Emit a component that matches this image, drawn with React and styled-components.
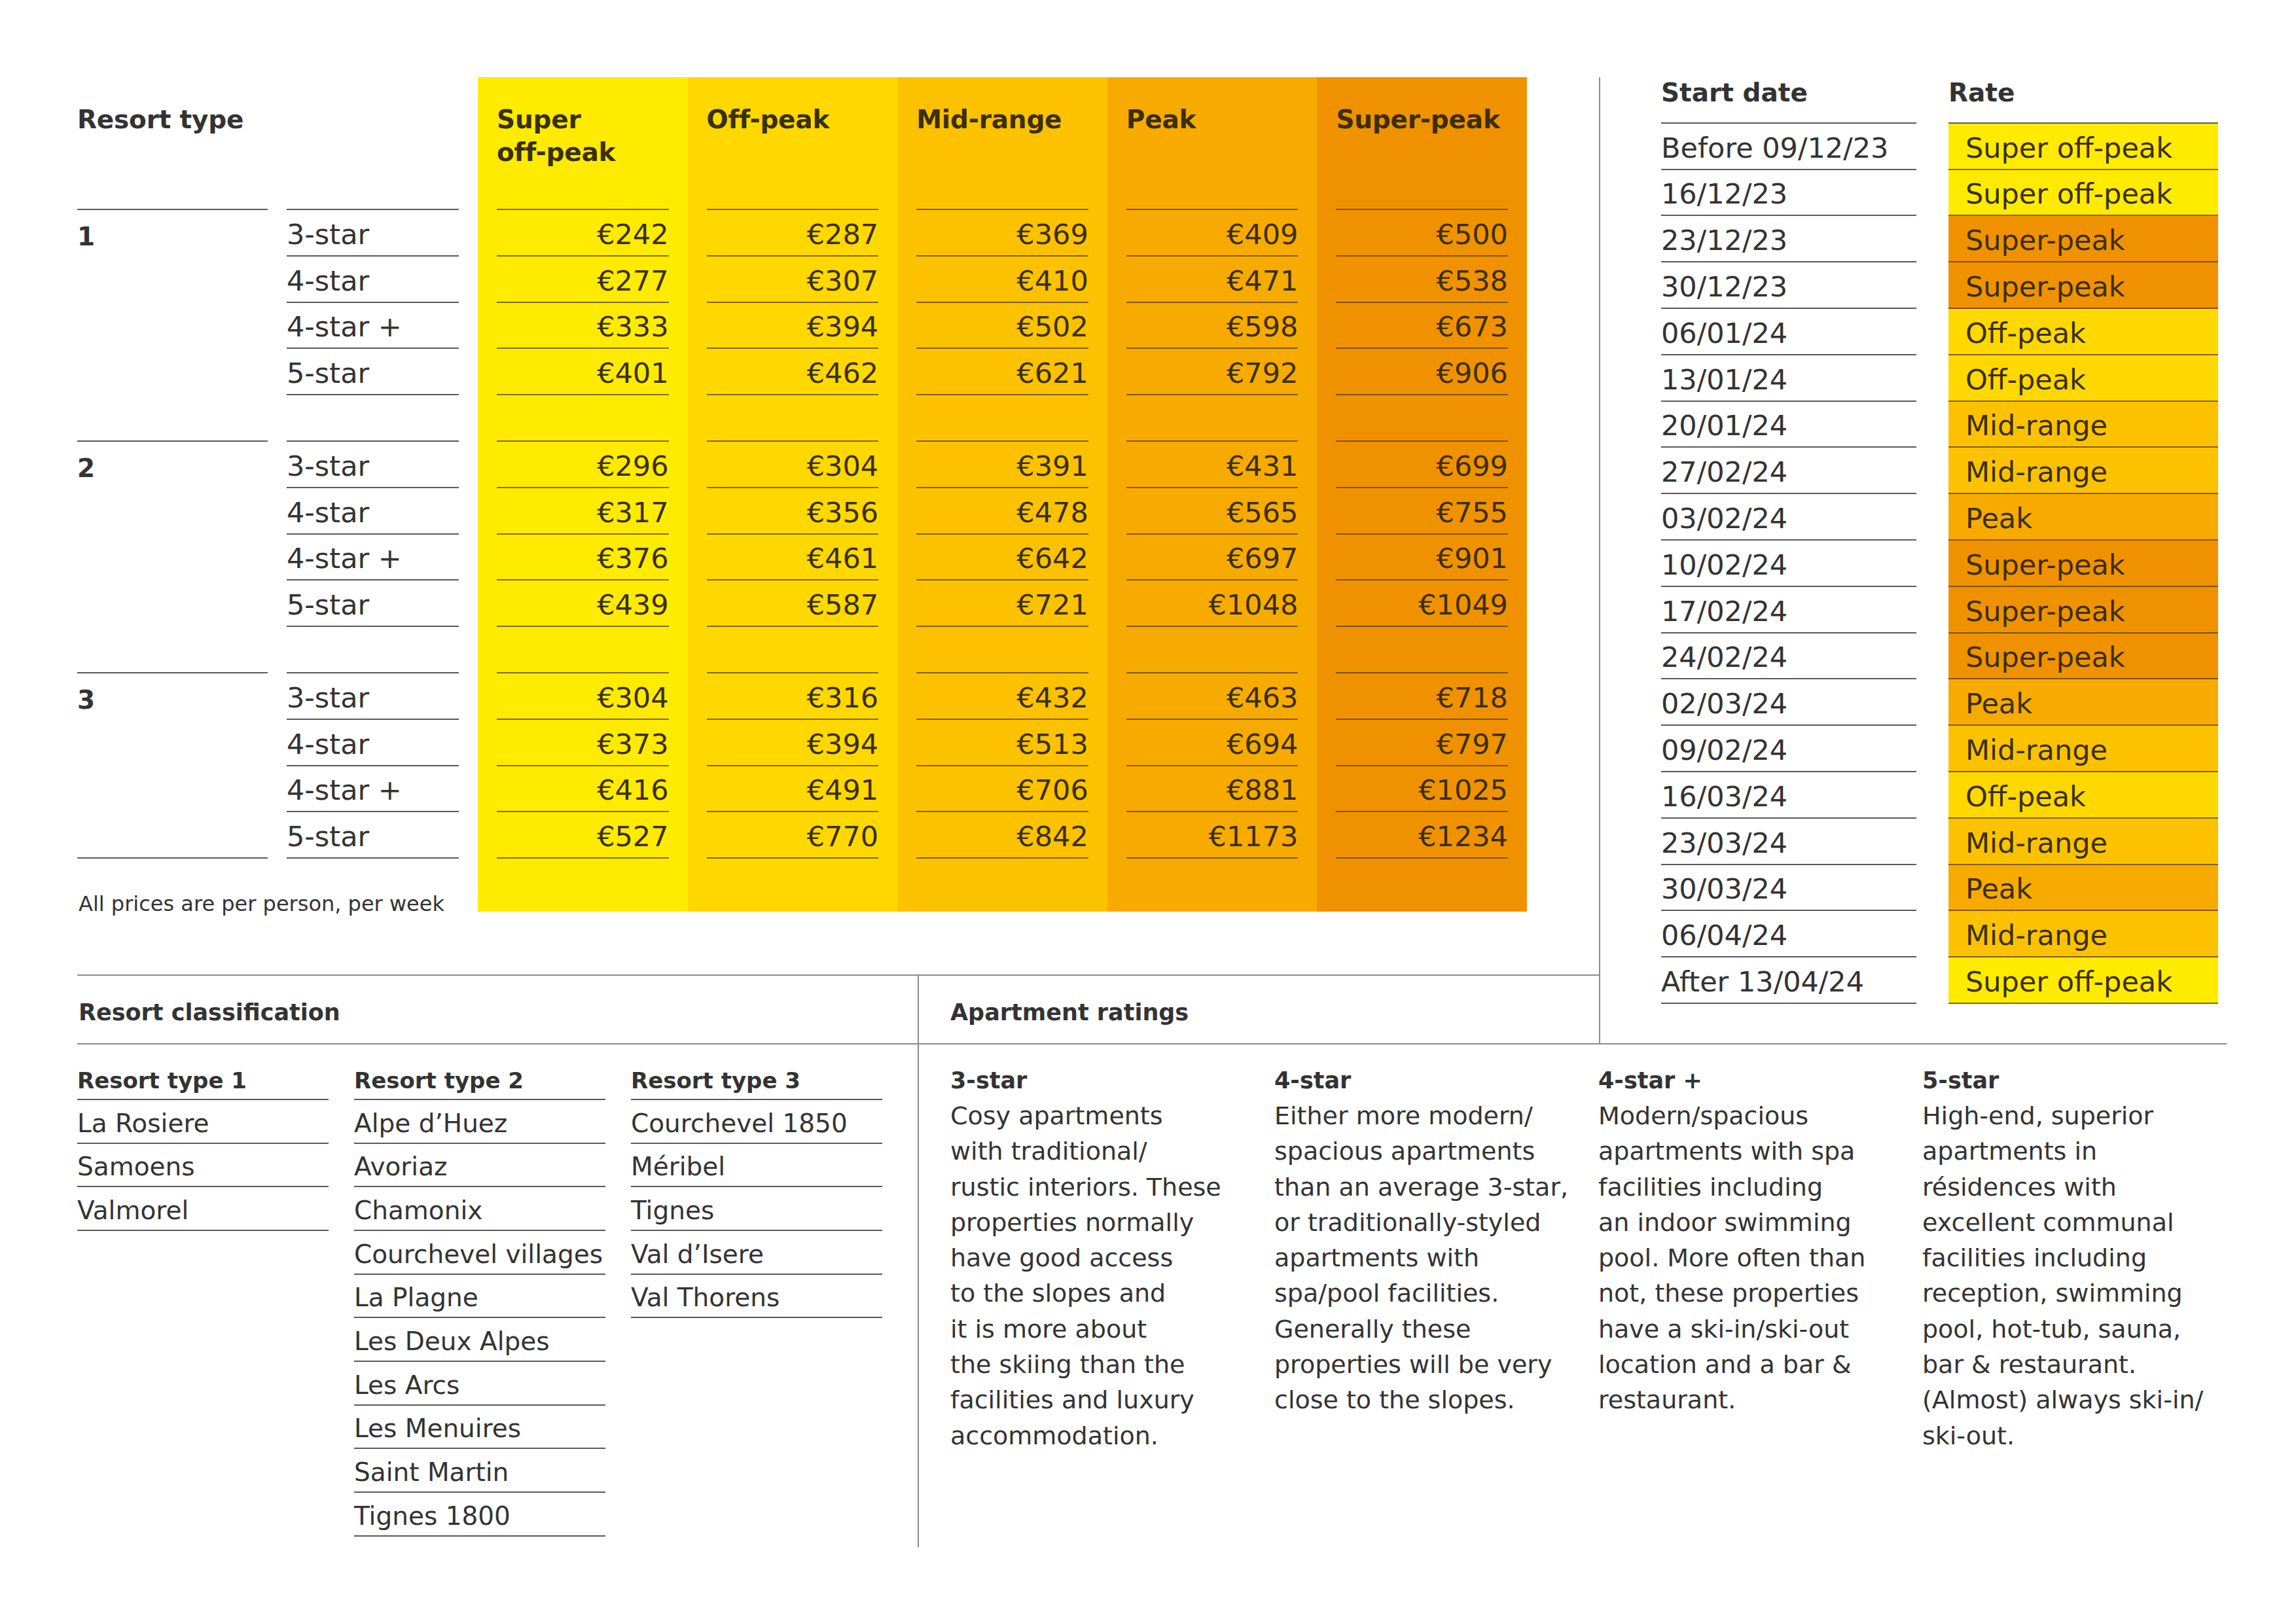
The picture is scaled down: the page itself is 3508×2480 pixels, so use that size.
import React from "react";
import styled, { createGlobalStyle } from "styled-components";

const INK = "#333333";
const BAND_INK = "#3a2f05";
const RULE = "#5a5a5a";
const BAND_RULE = "rgba(85, 55, 0, 0.72)";
const DIVIDER = "#8c8c8c";
const ROW = 70.8;

const GlobalStyle = createGlobalStyle`
  html, body { margin: 0; padding: 0; background: #ffffff; }
  body {
    font-family: "DejaVu Sans", "Liberation Sans", sans-serif;
    color: ${INK};
  }
`;

const Page = styled.div`
  width: 3284px;
  padding: 118px 0 0 118px;
`;

const TopArea = styled.div`
  display: grid;
  grid-template-columns: 2325px 959px;
`;

const LeftPane = styled.div`
  display: flex;
  flex-direction: column;
`;

const PriceTable = styled.div`
  display: flex;
  align-items: flex-start;
  width: 2215px;
`;

const LabelBlock = styled.div`
  display: flex;
  flex-direction: column;
  width: 612px;
`;

const LabelColumns = styled.div`
  display: flex;
`;

const Column = styled.div`
  width: ${(p) => p.$width}px;
  box-sizing: border-box;
  padding: ${(p) => (p.$band ? "0 29px 81px 29px" : "0 29px 0 0")};
  background: ${(p) => p.$bg || "transparent"};
  color: ${(p) => (p.$band ? BAND_INK : INK)};
  display: flex;
  flex-direction: column;
`;

const HeaderCell = styled.div`
  height: 203px;
  box-sizing: border-box;
  border-bottom: 2px solid ${(p) => (p.$band ? BAND_RULE : RULE)};
  padding-top: 40px;
  font-weight: 700;
  font-size: 39px;
  line-height: 50px;
  letter-spacing: -0.2px;
  white-space: nowrap;
`;

const GroupCell = styled.div`
  height: ${(p) => p.$rows * ROW}px;
  box-sizing: border-box;
  border-bottom: 2px solid ${RULE};
  padding-top: 21px;
  font-weight: 700;
  font-size: 39px;
  line-height: 1;
`;

const RowCell = styled.div`
  height: ${ROW}px;
  box-sizing: border-box;
  border-bottom: 2px solid ${(p) => (p.$band ? BAND_RULE : RULE)};
  display: flex;
  align-items: flex-end;
  justify-content: ${(p) => (p.$right ? "flex-end" : "flex-start")};
  padding-bottom: 10px;
  font-size: 43px;
  line-height: 1;
  white-space: nowrap;
`;

const Footnote = styled.div`
  margin-top: 53px;
  font-size: 32px;
  line-height: 1;
  white-space: nowrap;
  padding-left: 2px;
`;

const SectionHeadRow = styled.div`
  margin-top: auto;
  height: 105px;
  box-sizing: border-box;
  border-top: 2px solid ${DIVIDER};
  display: grid;
  grid-template-columns: 1286px 1fr;
`;

const SectionTitle = styled.div`
  box-sizing: border-box;
  padding: 39px 0 0 ${(p) => (p.$first ? 2 : 48)}px;
  border-right: ${(p) => (p.$first ? `2px solid ${DIVIDER}` : "none")};
  font-weight: 700;
  font-size: 35px;
  line-height: 1;
  white-space: nowrap;
`;

const RightPane = styled.div`
  border-left: 2px solid ${DIVIDER};
  padding: 0 0 60px 93px;
`;

const DateGrid = styled.div`
  display: grid;
  grid-template-columns: 390px 412px;
  column-gap: 49px;
`;

const DateHead = styled.div`
  height: ${ROW}px;
  box-sizing: border-box;
  border-bottom: 2px solid ${RULE};
  padding-top: 4px;
  font-weight: 700;
  font-size: 39px;
  line-height: 1;
`;

const DateCell = styled.div`
  height: ${ROW}px;
  box-sizing: border-box;
  border-bottom: 2px solid ${(p) => (p.$bg ? BAND_RULE : RULE)};
  background: ${(p) => p.$bg || "transparent"};
  color: ${(p) => (p.$bg ? BAND_INK : INK)};
  padding: 0 0 10px ${(p) => (p.$bg ? 26 : 0)}px;
  display: flex;
  align-items: flex-end;
  font-size: 43px;
  line-height: 1;
  white-space: nowrap;
`;

const BottomArea = styled.div`
  display: grid;
  grid-template-columns: 1286px 1fr;
  border-top: 2px solid ${DIVIDER};
`;

const Classification = styled.div`
  box-sizing: border-box;
  border-right: 2px solid ${DIVIDER};
  padding-bottom: 16px;
  display: grid;
  grid-template-columns: repeat(3, 384px);
  column-gap: 39px;
  align-items: start;
`;

const ClassColumn = styled.div`
  display: flex;
  flex-direction: column;
`;

const ClassHead = styled.div`
  height: 85px;
  box-sizing: border-box;
  border-bottom: 2px solid ${RULE};
  display: flex;
  align-items: flex-end;
  padding-bottom: 11px;
  font-weight: 700;
  font-size: 34px;
  line-height: 1;
  white-space: nowrap;
`;

const ClassItem = styled.div`
  height: 66.7px;
  box-sizing: border-box;
  border-bottom: 2px solid ${RULE};
  display: flex;
  align-items: flex-end;
  padding-bottom: 10px;
  font-size: 39px;
  line-height: 1;
  white-space: nowrap;
`;

const Ratings = styled.div`
  padding: 27.7px 0 0 48px;
  display: grid;
  grid-template-columns: repeat(4, 460px);
  column-gap: 35px;
  align-items: start;
`;

const RatingTitle = styled.div`
  font-weight: 700;
  font-size: 35px;
  line-height: 54.3px;
  white-space: nowrap;
`;

const RatingBody = styled.div`
  font-size: 38px;
  line-height: 54.3px;
`;

const RatingLine = styled.span`
  display: block;
  white-space: nowrap;
`;

const BANDS = [
  { key: "sop", name: "Super off-peak", label: ["Super", "off-peak"], color: "#FFEB00" },
  { key: "op", name: "Off-peak", label: ["Off-peak"], color: "#FFD800" },
  { key: "mr", name: "Mid-range", label: ["Mid-range"], color: "#FCC200" },
  { key: "pk", name: "Peak", label: ["Peak"], color: "#F7AB00" },
  { key: "sp", name: "Super-peak", label: ["Super-peak"], color: "#F09200" },
];
const BAND_COLOR = Object.fromEntries(BANDS.map((b) => [b.name, b.color]));

const STARS = ["3-star", "4-star", "4-star +", "5-star"];

const PRICES = [
  [
    [242, 287, 369, 409, 500],
    [277, 307, 410, 471, 538],
    [333, 394, 502, 598, 673],
    [401, 462, 621, 792, 906],
  ],
  [
    [296, 304, 391, 431, 699],
    [317, 356, 478, 565, 755],
    [376, 461, 642, 697, 901],
    [439, 587, 721, 1048, 1049],
  ],
  [
    [304, 316, 432, 463, 718],
    [373, 394, 513, 694, 797],
    [416, 491, 706, 881, 1025],
    [527, 770, 842, 1173, 1234],
  ],
];

const DATES = [
  ["Before 09/12/23", "Super off-peak"],
  ["16/12/23", "Super off-peak"],
  ["23/12/23", "Super-peak"],
  ["30/12/23", "Super-peak"],
  ["06/01/24", "Off-peak"],
  ["13/01/24", "Off-peak"],
  ["20/01/24", "Mid-range"],
  ["27/02/24", "Mid-range"],
  ["03/02/24", "Peak"],
  ["10/02/24", "Super-peak"],
  ["17/02/24", "Super-peak"],
  ["24/02/24", "Super-peak"],
  ["02/03/24", "Peak"],
  ["09/02/24", "Mid-range"],
  ["16/03/24", "Off-peak"],
  ["23/03/24", "Mid-range"],
  ["30/03/24", "Peak"],
  ["06/04/24", "Mid-range"],
  ["After 13/04/24", "Super off-peak"],
];

const RESORTS = [
  { title: "Resort type 1", items: ["La Rosiere", "Samoens", "Valmorel"] },
  {
    title: "Resort type 2",
    items: [
      "Alpe d’Huez",
      "Avoriaz",
      "Chamonix",
      "Courchevel villages",
      "La Plagne",
      "Les Deux Alpes",
      "Les Arcs",
      "Les Menuires",
      "Saint Martin",
      "Tignes 1800",
    ],
  },
  { title: "Resort type 3", items: ["Courchevel 1850", "Méribel", "Tignes", "Val d’Isere", "Val Thorens"] },
];

const RATINGS = [
  {
    title: "3-star",
    lines: [
      "Cosy apartments",
      "with traditional/",
      "rustic interiors. These",
      "properties normally",
      "have good access",
      "to the slopes and",
      "it is more about",
      "the skiing than the",
      "facilities and luxury",
      "accommodation.",
    ],
  },
  {
    title: "4-star",
    lines: [
      "Either more modern/",
      "spacious apartments",
      "than an average 3-star,",
      "or traditionally-styled",
      "apartments with",
      "spa/pool facilities.",
      "Generally these",
      "properties will be very",
      "close to the slopes.",
    ],
  },
  {
    title: "4-star +",
    lines: [
      "Modern/spacious",
      "apartments with spa",
      "facilities including",
      "an indoor swimming",
      "pool. More often than",
      "not, these properties",
      "have a ski-in/ski-out",
      "location and a bar &",
      "restaurant.",
    ],
  },
  {
    title: "5-star",
    lines: [
      "High-end, superior",
      "apartments in",
      "résidences with",
      "excellent communal",
      "facilities including",
      "reception, swimming",
      "pool, hot-tub, sauna,",
      "bar & restaurant.",
      "(Almost) always ski-in/",
      "ski-out.",
    ],
  },
];

function starRows() {
  const rows = [];
  PRICES.forEach((group, g) => {
    STARS.forEach((s) => rows.push({ key: `${g}-${s}`, label: s }));
    if (g < PRICES.length - 1) rows.push({ key: `${g}-gap`, label: "" });
  });
  return rows;
}

function bandRows(bandIndex) {
  const rows = [];
  PRICES.forEach((group, g) => {
    group.forEach((r, i) => rows.push({ key: `${g}-${i}`, value: `€${r[bandIndex]}` }));
    if (g < PRICES.length - 1) rows.push({ key: `${g}-gap`, value: "" });
  });
  return rows;
}

export default function App() {
  return (
    <>
      <GlobalStyle />
      <Page>
        <TopArea>
          <LeftPane>
            <PriceTable>
              <LabelBlock>
                <LabelColumns>
                  <Column $width={320}>
                    <HeaderCell>Resort type</HeaderCell>
                    <GroupCell $rows={5}>1</GroupCell>
                    <GroupCell $rows={5}>2</GroupCell>
                    <GroupCell $rows={4}>3</GroupCell>
                  </Column>
                  <Column $width={292}>
                    <HeaderCell />
                    {starRows().map((r) => (
                      <RowCell key={r.key}>{r.label}</RowCell>
                    ))}
                  </Column>
                </LabelColumns>
                <Footnote>All prices are per person, per week</Footnote>
              </LabelBlock>
              {BANDS.map((b, bi) => (
                <Column key={b.key} $width={320.6} $band $bg={b.color}>
                  <HeaderCell $band>
                    {b.label.map((l) => (
                      <div key={l}>{l}</div>
                    ))}
                  </HeaderCell>
                  {bandRows(bi).map((r) => (
                    <RowCell key={r.key} $band $right>
                      {r.value}
                    </RowCell>
                  ))}
                </Column>
              ))}
            </PriceTable>
            <SectionHeadRow>
              <SectionTitle $first>Resort classification</SectionTitle>
              <SectionTitle>Apartment ratings</SectionTitle>
            </SectionHeadRow>
          </LeftPane>
          <RightPane>
            <DateGrid>
              <DateHead>Start date</DateHead>
              <DateHead>Rate</DateHead>
              {DATES.map(([d, r]) => (
                <React.Fragment key={d}>
                  <DateCell>{d}</DateCell>
                  <DateCell $bg={BAND_COLOR[r]}>{r}</DateCell>
                </React.Fragment>
              ))}
            </DateGrid>
          </RightPane>
        </TopArea>
        <BottomArea>
          <Classification>
            {RESORTS.map((c) => (
              <ClassColumn key={c.title}>
                <ClassHead>{c.title}</ClassHead>
                {c.items.map((i) => (
                  <ClassItem key={i}>{i}</ClassItem>
                ))}
              </ClassColumn>
            ))}
          </Classification>
          <Ratings>
            {RATINGS.map((r) => (
              <div key={r.title}>
                <RatingTitle>{r.title}</RatingTitle>
                <RatingBody>
                  {r.lines.map((l, i) => (
                    <RatingLine key={i}>{l}</RatingLine>
                  ))}
                </RatingBody>
              </div>
            ))}
          </Ratings>
        </BottomArea>
      </Page>
    </>
  );
}
